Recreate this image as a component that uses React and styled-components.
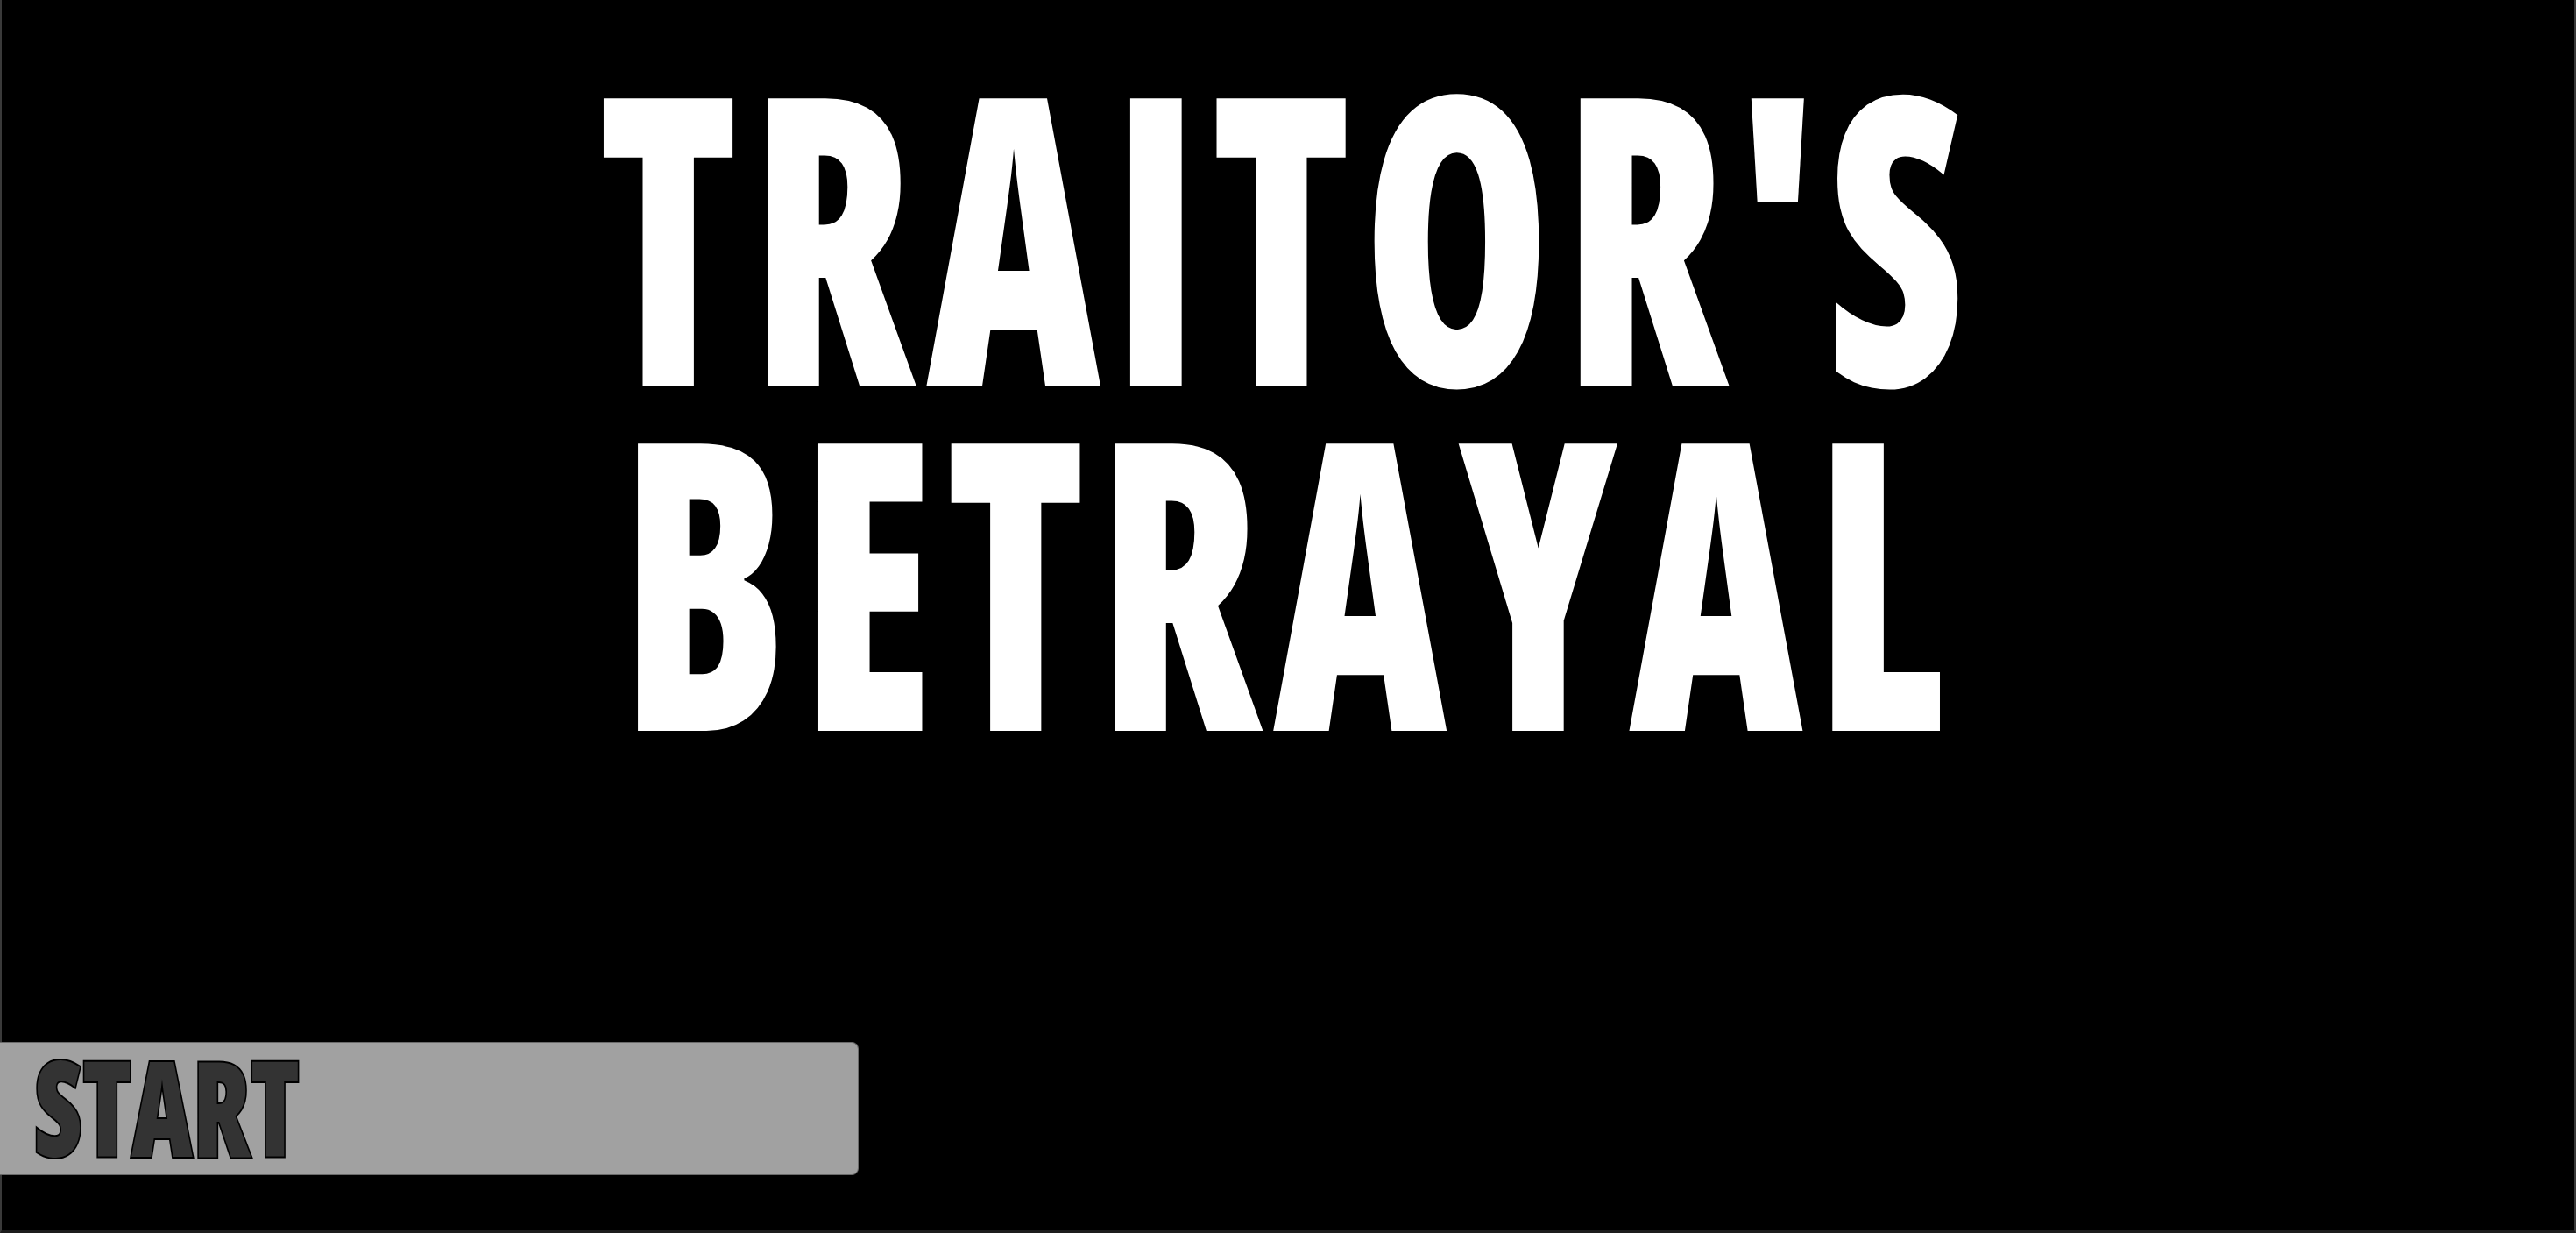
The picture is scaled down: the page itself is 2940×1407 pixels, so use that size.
import React from 'react';
import styled, { createGlobalStyle } from 'styled-components';

const GlobalStyle = createGlobalStyle`
  html, body {
    margin: 0;
    padding: 0;
    background: #000;
    overflow: hidden;
  }
`;

function App() {
  return (
    <>
      <GlobalStyle />
      <Screen>
        <Title>
          <TitleLine $squeeze={0.753}>TRAITOR'S</TitleLine>
          <TitleLine $squeeze={0.751}>BETRAYAL</TitleLine>
        </Title>
        <MenuButton type="button">
          <ButtonLabel>START</ButtonLabel>
        </MenuButton>
      </Screen>
    </>
  );
}

const Screen = styled.div`
  box-sizing: border-box;
  width: 100vw;
  height: 100vh;
  background: #000;
  border-left: 2px solid #3a3a3a;
  border-right: 2px solid #3a3a3a;
  border-bottom: 3px solid #1c1c1c;
  display: flex;
  flex-direction: column;
`;

const Title = styled.h1`
  margin: 0;
  padding-top: 65px;
  display: flex;
  flex-direction: column;
  align-items: center;
  font-family: "Open Sans", "Liberation Sans", sans-serif;
  font-weight: 800;
  font-stretch: condensed;
  font-size: 459px;
  line-height: 394px;
  color: #fff;
`;

const TitleLine = styled.span`
  display: inline-block;
  white-space: nowrap;
  letter-spacing: 18px;
  transform: scaleX(${p => p.$squeeze});
  transform-origin: center;
`;

const MenuButton = styled.button`
  margin: auto 0 63px -2px;
  box-sizing: border-box;
  width: 980px;
  height: 152px;
  padding: 0 0 0 39px;
  display: flex;
  align-items: flex-start;
  background: #a1a1a1;
  border: 1px solid #6a6a6a;
  border-left: none;
  border-radius: 0 8px 8px 0;
  cursor: pointer;
  overflow: hidden;
`;

const ButtonLabel = styled.span`
  display: inline-block;
  margin-top: -3px;
  font-family: "Open Sans", "Liberation Sans", sans-serif;
  font-weight: 800;
  font-stretch: condensed;
  font-size: 150px;
  line-height: 150px;
  color: #333;
  -webkit-text-stroke: 4px #000;
  paint-order: stroke fill;
  white-space: nowrap;
  transform: scaleX(0.81);
  transform-origin: left center;
`;

export default App;
